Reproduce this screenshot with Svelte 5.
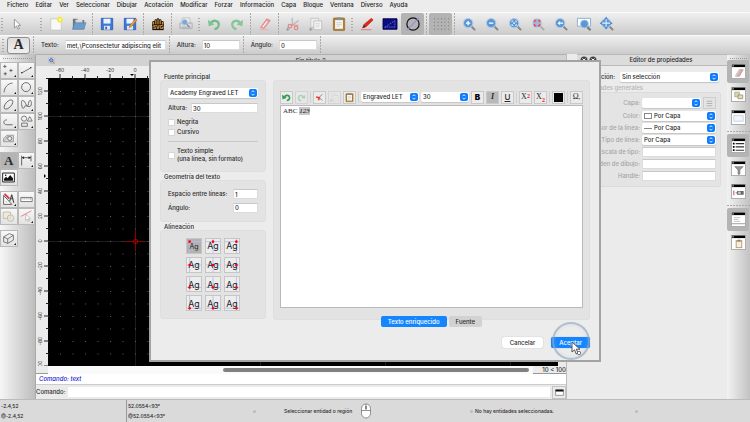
<script>
  const menus = ['Fichero', 'Editar', 'Ver', 'Seleccionar', 'Dibujar', 'Acotación', 'Modificar', 'Forzar', 'Información', 'Capa', 'Bloque', 'Ventana', 'Diverso', 'Ayuda'];

  const lens = (inner) => `<path d="M10.500 10.500l4.500 4.500" stroke="#888" stroke-width="2.400"/><circle cx="7" cy="7" r="5.400" fill="#5b96d6" stroke="#b4cbe4" stroke-width="1.200"/>${inner}`;
  const win = (inner) => `<rect x=".5" y=".5" width="15" height="15" fill="#fff" stroke="#aaa"/><path d="M1 2h14" stroke="#000" stroke-width="2.600"/><path d="M1.500 2h1.500" stroke="#fff"/>${inner}`;

  const icons = {
    cursor: '<path d="M5 2.500v10l2.400-2.200 1.800 3.700 1.600-.8-1.800-3.600h3.200z" fill="#fff" stroke="#777" stroke-width=".8"/>',
    sheet: '<path d="M2 2h12v13H2z" fill="#f8f8f8" stroke="#bbb" stroke-width=".7"/><circle cx="12.500" cy="3" r="3.300" fill="#f3ea38"/><circle cx="12.500" cy="3" r="1.300" fill="#fffbd0"/>',
    folder: '<path d="M1 2h5l1 1.500h7V14H1z" fill="#777"/><path d="M4 3h8v6H4z" fill="#d9d9d9"/><path d="M.5 14L3 6.500h13L13.500 14z" fill="#6d9cc9" stroke="#4a7bab" stroke-width=".6"/>',
    save: '<path d="M1.500 1.500h13v13h-13z" fill="#3b78d8" stroke="#1c4fae" stroke-width=".8"/><path d="M4 2h8v5.500H4z" fill="#eef4ff"/><path d="M4.500 10h7v4.500h-7z" fill="#dfe5ee"/><path d="M6 11h2v3H6z" fill="#3b63a5"/>',
    saveas: '<path d="M1.500 1.500h13v13h-13z" fill="#3b78d8" stroke="#1c4fae" stroke-width=".8"/><path d="M4 2h8v5.500H4z" fill="#eef4ff"/><path d="M4.500 10h7v4.500h-7z" fill="#dfe5ee"/><path d="M14.500 2L8 9.500l-1 2.500 2.500-1L16 3.500z" fill="#f0a53a" stroke="#a05a10" stroke-width=".6"/>',
    svg: '<path d="M3 9V6M5.500 8V4M10.500 8V4M13 9V6M8 9V3" stroke="#111" stroke-width="3" stroke-linecap="round"/><path d="M3 9V6M5.500 8V4M10.500 8V4M13 9V6M8 9V3" stroke="#f0a030" stroke-width="1.200" stroke-linecap="round"/><path d="M1.500 8.500h13v6.500h-13z" fill="#111"/><text x="8" y="13.800" font-size="5.500" font-weight="700" text-anchor="middle" fill="#f5ad3a" font-family="Inter, sans-serif">SVG</text>',
    print: '<path d="M4 1h8l1 6H3z" fill="#eee" stroke="#aaa" stroke-width=".7"/><path d="M1 7h14v6H1z" fill="#d8dade" stroke="#9a9ea6" stroke-width=".8"/><path d="M3 11h10v3H3z" fill="#b5b8bd"/><circle cx="6.500" cy="6" r="3.200" fill="#78a8de" stroke="#b3cbe6"/><path d="M9 8.500l3 3" stroke="#888" stroke-width="1.500"/>',
    undo: '<path d="M4.500 7C6.500 3 13 3.500 13.500 8c.2 3-2 5.500-5 6" fill="none" stroke="#74bd88" stroke-width="2.600"/><path d="M1 3l1 7.500 6.500-2z" fill="#7cc492"/>',
    redo: '<path d="M11.500 7C9.500 3 3 3.500 2.500 8c-.2 3 2 5.500 5 6" fill="none" stroke="#86c698" stroke-width="2.600"/><path d="M15 3l-1 7.500-6.500-2z" fill="#86c698"/>',
    eraser: '<path d="M10 2l4 2-7 9-4-1z" fill="#ef9a9a" stroke="#d57575" stroke-width=".7"/><path d="M10.500 5l-5 6.500" stroke="#fff" stroke-width="1.200"/><path d="M2 14.500h10" stroke="#eaa" />',
    cut: '<path d="M7.500 10L7 1M7.500 9l7-5" stroke="#bbb" stroke-width="1.500"/><circle cx="4.500" cy="10.500" r="2" fill="none" stroke="#e08a8a" stroke-width="1.500"/><circle cx="11.500" cy="12.500" r="2" fill="none" stroke="#e08a8a" stroke-width="1.500"/><path d="M5 9l9 .5" stroke="#e08a8a"/><path d="M0 14h4M2 12v4" stroke="#888" stroke-width=".8"/>',
    copy: '<path d="M2 1.500h9v10H2z" fill="#eee" stroke="#bbb" stroke-width=".8"/><path d="M5.500 4.500h9v10h-9z" fill="#f2f2f2" stroke="#b5b5b5" stroke-width=".8"/><path d="M7.500 7.500h5M7.500 9.500h5M7.500 11.500h4" stroke="#ccc" stroke-width=".7"/><path d="M0 14h4M2 12v4" stroke="#888" stroke-width=".8"/>',
    paste: '<rect x="1.500" y="1" width="13" height="14.500" rx="1" fill="#b07e35" stroke="#8b5f20" stroke-width=".6"/><path d="M3.500 3.500h9v10h-9z" fill="#f5f5f2"/><path d="M5 .5h6v3H5z" fill="#8d8d86"/><path d="M5 6.500h6M5 8.500h6M5 10.500h4" stroke="#bbb" stroke-width=".7"/>',
    pencil: '<path d="M13 1.500l2 2L7 11l-4 1.500 1.500-4z" fill="#e2281c" stroke="#a51a12" stroke-width=".6"/><path d="M3 12.500l1.500-3.500 2 2z" fill="#333"/><path d="M1 14.500h12" stroke="#e77" stroke-width="1.200"/>',
    draft: '<path d="M0 2h16v12H0z" fill="#0c0c84" stroke="#000045"/><path d="M2 12L13.500 4M2 11.500h12M13.500 5v6" stroke="#8c9ad8" stroke-width=".8" stroke-dasharray="1.500 1"/>',
    circle: '<circle cx="8" cy="8" r="7" fill="none" stroke="#111" stroke-width="1.400"/><path d="M1 15L15 1" stroke="#8f8fe0" stroke-width="1.200"/>',
    grid: '<path d="M0 2h17M0 6h17M0 10h17M0 14h17" stroke="#777" stroke-width="1.200" stroke-dasharray="1.200 2.800"/>',
    zin: lens('<path d="M4.500 7h5M7 4.500v5" stroke="#fff" stroke-width="1.500"/>'),
    zout: lens('<path d="M4.500 7h5" stroke="#fff" stroke-width="1.500"/>'),
    zauto: lens('<path d="M4.500 6V4.500H6M8 4.500h1.500V6M9.500 8v1.500H8M6 9.500H4.500V8M6 6l2 2M8 6L6 8" stroke="#e5f0fc" fill="none"/>'),
    zred: '<g opacity=".5">' + lens('') + '</g><path d="M4 6V4H6M8 4h2V6M10 8v2H8M6 10H4V8" stroke="#ee4b5c" fill="none" stroke-width="1.500"/>',
    zprev: lens('<path d="M4 7l3-2.500v1.700h3.500v1.600H7v1.700z" fill="#fff"/>'),
    zwin: '<path d="M.5 1.500h15v9H.5z" fill="#fff" stroke="#7fa9d8"/><path d="M11.500 11.500l4 3.500" stroke="#777" stroke-width="2.400"/><circle cx="8.500" cy="8" r="4.500" fill="#5b96d6" stroke="#a9c4e2"/>',
    zpan: lens('<path d="M2 7h10M7 2v10" stroke="#e5f0fc" stroke-width="1.200"/><path d="M-.5 7l3-2v4zM14.500 7l-3-2v4zM7-.5l-2 3h4zM7 14.500l-2-3h4z" fill="#4d8acb"/>'),
    points: '<path d="M1.500 3h4M3.500 1v4M9 8h4M11 6v4M2 12h4M4 10v4" stroke="#444" stroke-width=".9"/>',
    line: '<path d="M2 11L13 5" stroke="#555"/><path d="M1.500 10.500h1.500M12.500 4.500H14" stroke="#222" stroke-width="1.500"/>',
    arc: '<path d="M2.500 14C3 8 7 3 13 2.500" fill="none" stroke="#555"/>',
    circ: '<circle cx="7.500" cy="7.500" r="5.500" fill="none" stroke="#555"/>',
    ellipse: '<ellipse cx="8" cy="8" rx="7" ry="3.500" transform="rotate(-48 8 8)" fill="none" stroke="#555"/>',
    spline: '<path d="M3 3c4 0 4 7 6 7s1-6 3-7 3 5 1 7-6-2-7 0-2 4-3 2S1 3 3 3z" fill="none" stroke="#555"/>',
    poly: '<path d="M13 12H6C1 12 1 6 6 6" fill="none" stroke="#555"/>',
    shapes: '<circle cx="5" cy="4.500" r="3.200" fill="none" stroke="#555" stroke-width=".9"/><path d="M12 2l3 5.500H9zM2 10h7v4H2z" fill="none" stroke="#555" stroke-width=".9"/>',
    hatch: '<path d="M2 12V8l4-4h8v8z" fill="#ddd" stroke="#777" stroke-width=".8"/><circle cx="9.500" cy="8" r="2.500" fill="#eee" stroke="#666"/><path d="M3 11l5-6M4 8l3-3" stroke="#888" stroke-width=".6"/>',
    dim: '<path d="M2 2v12M13.500 2v7M3 4.500h10" stroke="#333" stroke-width=".9"/><path d="M2 4.500l3-1.800v3.600zM13.500 4.500l-3-1.800v3.600z" fill="#222"/>',
    image: '<path d="M.8 2.500h14.400v11H.8z" fill="#fff" stroke="#222" stroke-width="1.200"/><path d="M2.500 12V9.500L5 7l2 2 3-4 3.500 4v3z" fill="#111"/><circle cx="4.500" cy="5.300" r="1" fill="#111"/>',
    edit: '<path d="M2 3v11h10z" fill="#fff" stroke="#444"/><path d="M4.500 9v2.700h2.500z" fill="#bbb"/><path d="M3 1l6 6" stroke="#d33" stroke-width="2.200"/><path d="M12 2l-2.500 8M12 2l2.500 10M11 7h3" stroke="#444" stroke-width="1.300"/>',
    measure: '<path d="M1 5.500h14v5H1z" fill="#fff" stroke="#666"/><path d="M3.500 6v2M6 6v2M8.500 6v2M11 6v2M13 6v2" stroke="#666" stroke-width=".7"/>',
    block: '<path d="M1.500 2.500h9v8h-9z" fill="#eceadd" stroke="#bbb7a0"/><circle cx="10.500" cy="10" r="4" fill="#e9e6d0" fill-opacity=".7" stroke="#bbb7a0"/>',
    pick: '<path d="M1 8L14 1" stroke="#ec6a6a"/><path d="M7 5v8l2-1.600 1.400 2.800 1.200-.6-1.300-2.700h2.500z" fill="#fff" stroke="#999" stroke-width=".7"/>',
    cube: '<path d="M2 6l7-4 5 2v6l-7 4-5-2zM2 6l5 2.500L14 4M7 8.500V14" fill="none" stroke="#555" stroke-width=".9"/>',
    wEraser: win('<path d="M9 6h4l-4 7H5z" fill="#e9a5a5" stroke="#999" stroke-width=".7"/><path d="M8 6h2l-4 7H4z" fill="#ccc"/>'),
    wBlocks: win('<path d="M4 5.500h5v5H4z" fill="#dcd6ae" stroke="#998" stroke-width=".7"/><path d="M7.500 8.500h5v4h-5z" fill="#e8dfa6" stroke="#776" stroke-width=".7"/>'),
    wView: win('<path d="M3 6h10v6H3z" fill="#f2f6fb" stroke="#b9c9dc" stroke-width=".8"/>'),
    wList: win('<path d="M5 6h9M5 9.500h9M5 13h9" stroke="#333" stroke-width="1.200"/><path d="M2 6h1.800M2 9.500h1.800M2 13h1.800" stroke="#000" stroke-width="1.800"/>'),
    wFilter: win('<path d="M4 6h9l-3.500 3.500V14h-2V9.500z" fill="#999" stroke="#666" stroke-width=".6"/>'),
    wCam: win('<path d="M3 7v5M5 9.500h2" stroke="#b44"/><path d="M6.500 7.500h7v4h-7z" fill="#666"/><circle cx="9" cy="9.500" r="1.500" fill="#ccc"/>'),
    wCmd: win('<path d="M3 6h7M3 8h5M3 10h7" stroke="#aaa" stroke-width=".7"/><path d="M1 12.500h14" stroke="#999"/>'),
    wClip: win('<path d="M5 5.500h7v8.500H5z" fill="#c49a5a"/><path d="M6 7h5v6H6z" fill="#eee"/><path d="M7 5h3v2H7z" fill="#888"/>'),
    close: '<circle cx="8" cy="8" r="7" fill="#444"/><path d="M5 5l6 6M11 5l-6 6" stroke="#fff" stroke-width="2"/>',
    mag: '<rect x="1" y="1" width="13" height="13" rx="4" fill="#f4f6fb" stroke="#889"/><circle cx="7.500" cy="7.500" r="4" fill="#8ab0e8" stroke="#2c4da0" stroke-width="1.800"/><path d="M10.500 10.500L15 15" stroke="#c98a2a" stroke-width="2.500"/>',
    rundo: '<path d="M4.500 7C6.500 3 13 3.500 13.500 8c.2 3-2 5-5 5" fill="none" stroke="#2f9c50" stroke-width="3"/><path d="M0 3l1 8.500 7.500-3z" fill="#2f9c50"/>',
    cutRed: '<path d="M7 8L13.500 2M7 8l6 5" stroke="#888" stroke-width="1.600"/><path d="M2 7l7 2M6 13l2-5" stroke="#e33" stroke-width="2.600"/>',
    panel: '<path d="M1 3.500h14v9.500H1z" fill="#fff" stroke="#555"/><path d="M1 4.500h14" stroke="#111" stroke-width="3.500"/>',
    lines: '<path d="M3 4h10M3 8h10M3 12h10" stroke="#aaa" stroke-width="1.500"/>',
    mouse: '<rect x="3.500" y="1" width="9" height="14" rx="4.500" fill="#fff" stroke="#777" stroke-width=".8"/><path d="M3.500 7.500h9M8 1v6" stroke="#777" stroke-width=".8"/><rect x="7" y="3" width="2" height="3" fill="#888"/>'
  };

  const tools = [
    ['sheet', 'Nuevo'], ['folder', 'Abrir'], '|', ['save', 'Guardar'], ['saveas', 'Guardar como'], '|', ['svg', 'Exportar SVG'], '|', ['print', 'Vista previa'], ':',
    ['undo', 'Deshacer'], ['redo', 'Rehacer'], '|', ['eraser', 'Borrar'], '|', ['cut', 'Cortar'], ['copy', 'Copiar'], ['paste', 'Pegar'], ':',
    ['pencil', 'Editar'], ['draft', 'Borrador'], ['circle', 'Grosor', true], '|', ['grid', 'Rejilla', true], '|',
    ['zin', 'Acercar'], ['zout', 'Alejar'], ['zauto', 'Zoom automático'], ['zred', 'Zoom a selección'], ['zprev', 'Zoom previo'], ['zwin', 'Zoom de ventana'], ['zpan', 'Encuadre']
  ];

  const palette = [
    ['points', 'line', 'arc', 'circ', 'ellipse', 'spline', 'poly', 'shapes', 'hatch'],
    ['A', 'dim', 'image'],
    ['edit', 'measure', 'block', 'pick'],
    ['cube']
  ];
  const flat = ['image', 'A', 'measure', 'block'];

  const dock = [['wEraser', true], ['wBlocks'], ['wView'], '|', ['wList', true], ['wFilter'], ['wCam'], '|', ['wCmd', true], ['wClip']];

  const range = (a, b, s) => Array.from({ length: Math.floor((b - a) / s) + 1 }, (_, i) => a + i * s);
  const hTicks = range(-60, 10, 10);
  const vTicks = range(-100, 130, 10);

  const align = [3, 8, 12, 14].flatMap((y, r) => [3, 8, 13].map((x, c) => ({ x, y, r, on: r === 0 && c === 0 })));
</script>

{#snippet icon(name, size = 14)}
  <svg class="ico" width={size} height={size} viewBox="0 0 16 16" aria-hidden="true">{@html icons[name]}</svg>
{/snippet}

{#snippet select(id, value, swatch = '')}
  <span class="sel">
    <select {id} aria-label={id} class={swatch && 'indent'}><option>{value}</option></select>
    {#if swatch}<i class={swatch}></i>{/if}
    <svg class="chev" width="8" height="8" viewBox="0 0 8 8" aria-hidden="true">
      <rect width="8" height="8" rx="2" fill="#0a7aff" /><path d="M2.500 3.200L4 1.700l1.500 1.500M2.500 4.800L4 6.300l1.500-1.500" fill="none" stroke="#fff" stroke-width=".9" />
    </svg>
  </span>
{/snippet}

<div class="app">
  <nav class="menu">
    {#each menus as m}<a href="#menu">{m}</a>{/each}
  </nav>

  <div class="tools">
    <div class="first">
      <span class="grip"></span>
      <button class="tool" aria-label="Seleccionar">{@render icon('cursor')}</button>
    </div>
    <span class="grip"></span>
    {#each tools as t}
      {#if t === '|'}<span class="sep"></span>
      {:else if t === ':'}<span class="grip"></span>
      {:else}<button class="tool" class:on={t[2]} aria-label={t[1]}>{@render icon(t[0])}</button>{/if}
    {/each}
  </div>

  <div class="options">
    <span class="grip"></span>
    <button class="bigA" aria-label="Texto">A</button>
    <span class="sep"></span>
    <label>Texto: <input class="wide" value="met,\Pconsectetur adipiscing elit" /></label>
    <span class="sep"></span>
    <label>Altura: <input value="10" /></label>
    <span class="sep"></span>
    <label>Ángulo: <input value="0" /></label>
    <span class="sep"></span>
  </div>

  <div class="main">
    <aside class="palette">
      <span class="hgrip"></span>
      {#each palette as group}
        <div class="group">
          {#each group as p}
            <button class:on={p === 'A'} class:more={!flat.includes(p)} aria-label={p}>
              {#if p === 'A'}<b>A</b>{:else}{@render icon(p, 13)}{/if}
            </button>
          {/each}
        </div>
      {/each}
    </aside>

    <section class="center">
      <header class="doc">{@render icon('mag', 7)}<span>Sin título 2</span></header>
      <svg class="hruler" aria-hidden="true">
        {#each hTicks as t}
          <path d="M{99 + t * 1.25} {t % 20 ? 10 : 8}V12" stroke="#222" />
          {#if t % 20 === 0}<text x={99 + t * 1.25} y="6" text-anchor="middle">{t}</text>{/if}
        {/each}
        <path d="M94 8h4l-2 2z" />
      </svg>
      <div class="work">
        <svg class="vruler" aria-hidden="true">
          {#each vTicks as t}
            <path d="M{t % 20 ? 10 : 8} {163 - t * 1.25}H12" stroke="#222" />
            {#if t % 20 === 0}<text transform="translate(6 {163 - t * 1.25}) rotate(-90)" text-anchor="middle">{t}</text>{/if}
          {/each}
          <path d="M8 96v4l2-2z" />
        </svg>
        <svg class="canvas" aria-hidden="true">
          <defs>
            <pattern id="dots" x="87" y="163" width="12.5" height="12.5" patternUnits="userSpaceOnUse"><path d="M0 .5h1" stroke="#606060" /></pattern>
            <pattern id="meta" x="87" y="163" width="125" height="125" patternUnits="userSpaceOnUse"><path d="M.5 0v125M0 .5h125" stroke="#1c1c1c" /></pattern>
          </defs>
          <rect width="100%" height="100%" fill="#000" />
          <rect width="100%" height="100%" fill="url(#meta)" />
          <rect width="100%" height="100%" fill="url(#dots)" />
          <path d="M77 163.500h20M87.500 153v20" stroke="#8c0000" />
          <circle cx="87.500" cy="163.500" r="2.200" fill="none" stroke="#a00000" />
        </svg>
      </div>
      <div class="hscroll"><div class="track"><div class="thumb"></div></div><span>10 &lt; 100</span></div>
      <output class="log">Comando: text</output>
      <div class="cmd">
        <label for="cmd">Comando:</label><input id="cmd" />
        <button aria-label="Panel">{@render icon('panel', 9)}</button>
      </div>
    </section>

    <section class="props">
      <header>{@render icon('close', 8)}{@render icon('close', 8)}<span>Editor de propiedades</span></header>
      <div class="selrow"><label for="Selección">Selección:</label>{@render select('Selección', 'Sin selección')}</div>
      <div class="gtitle">Propiedades generales</div>
      <div class="pgroup">
        <label for="Capa">Capa:</label>
        <div class="layer">{@render select('Capa', '')}<button aria-label="Capas">{@render icon('lines', 9)}</button></div>
        <label for="Color">Color:</label>{@render select('Color', 'Por Capa', 'box')}
        <label for="Grosor de la línea">Grosor de la línea:</label>{@render select('Grosor de la línea', 'Por Capa', 'dash')}
        <label for="Tipo de línea">Tipo de línea:</label>{@render select('Tipo de línea', 'Por Capa')}
        <label for="scale">Escala de tipo:</label><input id="scale" />
        <label for="order">Orden de dibujo:</label><input id="order" />
        <label for="handle">Handle:</label><input id="handle" />
      </div>
    </section>

    <aside class="dock">
      <span class="hgrip"></span>
      {#each dock as d}
        {#if d === '|'}<span class="hsep"></span>
        {:else}<button class:on={d[1]} aria-label={d[0]}>{@render icon(d[0], 15)}</button>{/if}
      {/each}
    </aside>
  </div>

  <footer>
    <div><span>-2.4,52</span><span>@-2.4,52</span></div>
    <div class="polar"><span>52.0554&lt;93°</span><span>@52.0554&lt;93°</span></div>
    <div class="hint"><i></i><span>Seleccionar entidad o región</span>{@render icon('mouse', 16)}</div>
    <div class="hint left"><i></i><span>No hay entidades seleccionadas.</span></div>
    <div class="hint left"><i></i></div>
  </footer>

  <div class="dialog" role="dialog" aria-label="Texto">
    <div class="body">
      <div class="col">
        <h3>Fuente principal</h3>
        <div class="card font">
          {@render select('Fuente', 'Academy Engraved LET')}
          <label class="row">Altura: <input value="30" /></label>
          <div class="checks">
            <label><input type="checkbox" /> Negrita</label>
            <label><input type="checkbox" /> Cursivo</label>
          </div>
          <hr />
          <label class="chk"><input type="checkbox" /> <span>Texto simple<br />(una línea, sin formato)</span></label>
        </div>
        <h3>Geometría del texto</h3>
        <div class="card geo">
          <label>Espacio entre líneas: <input value="1" /></label>
          <label>Ángulo: <input value="0" /></label>
        </div>
        <h3>Alineación</h3>
        <div class="card aligns">
          {#each align as a}
            <button class:on={a.on} aria-label="Alinear">
              <svg width="14" height="14" viewBox="0 0 16 16" aria-hidden="true">
                <path d="M{a.x} 0V16M0 {a.y}H16" stroke="#b9b9f0" />
                <text x="8" y={[11, 11, 12, 12][a.r]} font-size={a.on ? 8 : 10} text-anchor="middle">Ag</text>
                <circle cx={a.x} cy={a.y} r="1.500" fill="#f00" />
              </svg>
            </button>
          {/each}
        </div>
      </div>

      <div class="right">
        <div class="card rich">
          <div class="rtools">
            <button aria-label="Deshacer">{@render icon('rundo', 9)}</button>
            <button class="dim" aria-label="Rehacer">{@render icon('redo', 9)}</button>
            <span class="vs"></span>
            <button aria-label="Cortar">{@render icon('cutRed', 9)}</button>
            <button class="dim" aria-label="Copiar">{@render icon('copy', 9)}</button>
            <button aria-label="Pegar">{@render icon('paste', 9)}</button>
            <span class="vs"></span>
            <div class="fam">{@render select('Familia', 'Engraved LET')}</div>
            <div class="size">{@render select('Tamaño', '30')}</div>
            <button><b>B</b></button>
            <button class="on"><em>I</em></button>
            <button><u>U</u></button>
            <span class="vs"></span>
            <button class="serif">X<sup>2</sup></button>
            <button class="serif">X<sub>2</sub></button>
            <span class="vs"></span>
            <button aria-label="Color"><i class="black"></i></button>
            <span class="vs"></span>
            <button class="omega">Ω<small>,</small></button>
          </div>
          <div class="editor" contenteditable="true" role="textbox" tabindex="0">ABC <mark>123</mark></div>
        </div>
        <div class="tabs"><button class="active">Texto enriquecido</button><button>Fuente</button></div>
      </div>
    </div>
    <div class="actions"><button>Cancelar</button><button class="ok">Aceptar</button></div>
    <div class="halo">
      <svg width="12" height="16" viewBox="0 0 12 16" aria-hidden="true">
        <path d="M1 1v10l2.500-2.200L5.300 13l1.800-.8L5.300 8.200H9z" fill="#fff" stroke="#444" stroke-width=".9" /><circle cx="8" cy="12" r="1.700" fill="#fff" stroke="#555" stroke-width=".8" />
      </svg>
    </div>
  </div>
</div>

<style>
  :global(body) { margin: 0; }
  .app, .app * { box-sizing: border-box; }
  .app {
    position: relative; display: flex; flex-direction: column; min-height: 100vh; overflow: hidden;
    font: 500 6px/8px Inter, 'Liberation Sans', sans-serif; color: #2a2a2a; background: #ebebeb;
  }
  button, input, select { font: inherit; color: inherit; margin: 0; padding: 0; border: 0; background: none; border-radius: 0; }
  button { display: flex; align-items: center; justify-content: center; }
  input { background: #fff; border: 1px solid #dcdcdc; border-top-color: #c8c8c8; padding: 0 1px; min-width: 0; height: 10px; }
  .ico { display: block; flex: none; overflow: visible; }

  .menu { display: flex; gap: 7px; height: 12px; padding: 1px 7px 0; background: #ececec; }
  .menu a { color: #222; text-decoration: none; }

  .tools, .options { display: flex; align-items: center; background: linear-gradient(#efefef, #cbcbcb); border-top: 1px solid #fafafa; }
  .tools { height: 23px; }
  .first { display: flex; align-items: center; width: 39px; height: 100%; }
  .tool { width: 23px; height: 22px; }
  .tool.on { background: #b3b3b3; border-radius: 2px; }
  .sep { flex: none; width: 5px; height: 100%; background: linear-gradient(90deg, transparent 2px, #aaa 2px, #aaa 3px, transparent 3px); mask: repeating-linear-gradient(#000 0 2px, transparent 2px 3px); }
  .grip { flex: none; width: 5px; height: 14px; background: repeating-linear-gradient(transparent 0 1px, #aaa 1px 2px, transparent 2px 3px) 1px 0 / 2px 100% no-repeat; }

  .options { height: 19px; gap: 1px; padding-left: 1px; }
  .options label { display: flex; align-items: center; gap: 6px; padding-left: 4px; }
  .options input { width: 38px; }
  .options .wide { width: 101px; }
  .bigA { width: 23px; height: 17px; border: 1px solid #8f8f8f; border-radius: 3px; background: linear-gradient(#ddd, #f0f0f0); font: 700 14px/14px 'Liberation Serif', serif; }

  .main { flex: 1; display: flex; min-height: 0; }
  .palette { width: 36px; background: linear-gradient(90deg, #f6f6f6, #bdbdbd); border-top: 1px solid #c4c4c4; border-right: 1px solid #aaa; }
  .hgrip { display: block; height: 5px; margin: 0 3px 2px; background: repeating-linear-gradient(90deg, #999 0 1px, transparent 1px 2px) 0 3px / 100% 1px no-repeat; }
  .group { display: grid; grid-template-columns: 1fr 1fr; grid-auto-rows: 17px; margin-bottom: 5px; }
  .group button { position: relative; background: linear-gradient(#f8f8f8, #e2e2e2); border: 1px solid #b9b9b9; }
  .group button.on { background: #b4b4b4; }
  .group .more::after { content: ''; position: absolute; right: 1px; bottom: 1px; border: 1px solid #111; border-top-color: transparent; border-left-color: transparent; }
  .group b { font: 700 13px/14px 'Liberation Serif', serif; }

  .center { flex: 1; display: flex; flex-direction: column; min-width: 0; border-right: 1px solid #bbb; }
  .doc { display: flex; align-items: center; height: 12px; padding-left: 12px; background: #d2d2d2; border-top: 1px solid #b0b0b0; }
  .doc span { flex: 1; text-align: center; }
  .hruler { display: block; width: 100%; height: 12px; background: #ededed; }
  .hruler text, .vruler text { font-size: 5px; font-weight: 400; fill: #333; }
  .work { flex: 1; display: flex; min-height: 0; padding-right: 8px; }
  .vruler { width: 12px; height: 100%; flex: none; }
  .canvas { flex: 1; min-width: 0; height: 100%; }
  .hscroll { display: flex; align-items: center; height: 8px; padding-left: 12px; border-bottom: 1px solid #999; }
  .track { flex: 1; padding: 2px 4px 2px 175px; background: #fafafa; }
  .thumb { height: 4px; border-radius: 2px; background: #808080; }
  .hscroll span { width: 33px; text-align: right; }
  .log { display: block; height: 11px; padding: 1px 3px; background: #fff; color: #1a1ad6; font-style: italic; border-bottom: 1px solid #ccc; }
  .cmd { display: flex; align-items: center; height: 14px; gap: 2px; }
  .cmd input { flex: 1; border: 0; }
  .cmd button { width: 14px; height: 13px; border: 1px solid #c4c4c4; }

  .props { width: 160px; padding-left: 10px; background: #ebebeb; }
  .props header { display: flex; align-items: center; gap: 1px; height: 12px; padding: 0 3px; background: #dcdcdc; border: solid #b9b9b9; border-width: 1px 0; }
  .props header span { flex: 1; text-align: center; }
  .sel { display: grid; align-items: center; min-width: 0; background: #fff; border-radius: 2px; box-shadow: 0 1px 1px #c4c4c4; height: 10px; }
  .sel > * { grid-area: 1 / 1; }
  .sel select { appearance: none; width: 100%; height: 10px; padding-left: 2px; outline: 0; }
  .sel select.indent { padding-left: 12px; }
  .chev { justify-self: end; margin-right: 1px; pointer-events: none; }
  .box { width: 8px; height: 6px; margin-left: 2px; border: 1px solid #888; }
  .dash { width: 8px; height: 1px; margin-left: 2px; background: #888; }
  .selrow { display: grid; grid-template-columns: 38px 1fr; gap: 5px; align-items: center; padding: 6px 8px 2px 0; }
  .selrow label { text-align: right; }
  .gtitle { color: #b5b5b5; }
  .pgroup { display: grid; grid-template-columns: 62px 1fr; gap: 2px; align-items: center; margin-right: 6px; padding: 4px 4px 5px 0; background: #e4e4e4; border: 1px solid #dcdcdc; border-radius: 3px; }
  .pgroup label { text-align: right; color: #a5a5a5; white-space: nowrap; justify-self: end; }
  .layer { display: grid; grid-template-columns: 1fr 13px; gap: 2px; align-items: center; }
  .layer button { height: 12px; border: 1px solid #ccc; }

  .dock { width: 23px; border-top: 1px solid #c4c4c4; background: linear-gradient(90deg, #f2f2f2, #c2c2c2); }
  .dock .hgrip { margin: 0 3px; }
  .dock button { width: 22px; height: 23px; }
  .dock button.on { background: #b4b4b4; border-radius: 2px; }
  .hsep { display: block; height: 5px; background: repeating-linear-gradient(90deg, #aaa 0 2px, transparent 2px 3px) 0 2px / 100% 1px no-repeat; }

  footer { display: grid; grid-template-columns: 126px 126px 217px 165px 1fr; height: 23px; background: #dadada; border-top: 1px solid #bbb; font-size: 5px; }
  footer > div { display: flex; flex-direction: column; justify-content: space-between; padding: 2px 1px; }
  footer .polar { border-left: 1px solid #999; }
  footer .hint { flex-direction: row; align-items: center; justify-content: flex-start; }
  .hint i { width: 3px; height: 3px; border-radius: 2px; background: #bbb; }
  .hint span { margin-left: 28px; margin-right: 6px; }
  .hint.left span { margin-left: 2px; }

  .dialog { position: absolute; left: 149px; top: 60px; width: 452px; height: 302px; display: flex; flex-direction: column; padding: 11px 9px 0; background: #ececec; border: 2px solid #a3a3a3; }
  .body { display: grid; grid-template-columns: 106px 1fr; gap: 7px; }
  h3 { font: inherit; line-height: 7px; margin: 0; padding-left: 4px; }
  .card { background: #e3e3e3; border: 1px solid #dedede; border-radius: 3px; }
  .font { display: flex; flex-direction: column; gap: 5px; height: 92px; padding: 7px 7px; margin-bottom: 1px; }
  .font .row { display: flex; align-items: center; gap: 4px; }
  .font .row input { flex: 1; }
  .checks { display: flex; flex-direction: column; gap: 2px; }
  .checks label, .chk { display: flex; align-items: center; gap: 2px; }
  input[type='checkbox'] { appearance: none; width: 7px; height: 7px; border: 1px solid #d4d4d4; border-radius: 1px; background: #fff; }
  .font hr { width: 100%; height: 1px; margin: 0; border: 0; background: #c8c8c8; }
  .geo { display: flex; flex-direction: column; justify-content: space-evenly; height: 42px; padding: 5px 7px; margin-bottom: 1px; }
  .geo label { display: flex; align-items: center; justify-content: space-between; }
  .geo input { width: 25px; }
  .aligns { display: grid; grid-template-columns: repeat(3, 16px); grid-auto-rows: 16px; gap: 3px; justify-content: center; align-content: center; height: 89px; }
  .aligns button { border: 1px solid #c6c6c6; background: #ededed; }
  .aligns button.on { background: #b2b2b2; }
  .aligns text { font-weight: 400; fill: #222; }

  .right { display: flex; flex-direction: column; align-items: center; padding-top: 7px; }
  .rich { width: 100%; height: 240px; padding: 9px 6px 11px; display: flex; flex-direction: column; gap: 1px; }
  .rtools { display: flex; align-items: center; gap: 2px; height: 14px; }
  .rtools button { flex: none; width: 13px; height: 13px; border: 1px solid #c9c9c9; background: #ebebeb; }
  .rtools button.on { background: #b8b8b8; }
  .rtools .dim { opacity: .6; }
  .rtools b { font: 900 8px/8px Inter, sans-serif; color: #000; }
  .rtools em { font: italic 700 8px/8px 'Liberation Serif', serif; }
  .rtools u { font-size: 8px; }
  .rtools .serif { font: 400 8px/8px 'Liberation Serif', serif; }
  .rtools sup, .rtools sub { font-size: 6px; font-weight: 700; line-height: 4px; color: #e22; }
  .rtools sup { align-self: flex-start; margin-top: 2px; }
  .rtools sub { align-self: flex-end; margin-bottom: 1px; }
  .black { width: 9px; height: 9px; background: #000; }
  .rtools .omega { font: 400 8px/8px 'Liberation Serif', serif; }
  .vs { width: 1px; height: 12px; background: #d0d0d0; }
  .fam { width: 58px; }
  .size { flex: 1; }
  .editor { flex: 1; padding: 1px 2px; background: #fff; border: 1px solid #b9b9b9; font: 400 7px/9px 'Liberation Serif', serif; outline: 0; }
  .editor mark { background: #c8c8c8; color: #111; font-style: italic; font-weight: 400; }
  .tabs { display: flex; gap: 2px; margin-top: -4px; }
  .tabs button { height: 11px; padding: 0 7px; background: #d2d2d2; border-radius: 2px; }
  .tabs .active { background: #1585ff; color: #fff; }
  .actions { display: flex; justify-content: flex-end; gap: 8px; margin-top: 10px; }
  .actions button { height: 11px; padding: 0 8px; background: #fff; border-radius: 2px; box-shadow: 0 0 1px #999; }
  .actions .ok { background: #1585ff; color: #fff; }
  .halo { position: absolute; right: 9px; bottom: 0; display: flex; width: 38px; height: 38px; padding: 17px 0 0 17px; border: 2px solid #93a9c0a0; border-radius: 50%; background: radial-gradient(circle, transparent 55%, #9ab5d060); pointer-events: none; }
</style>
